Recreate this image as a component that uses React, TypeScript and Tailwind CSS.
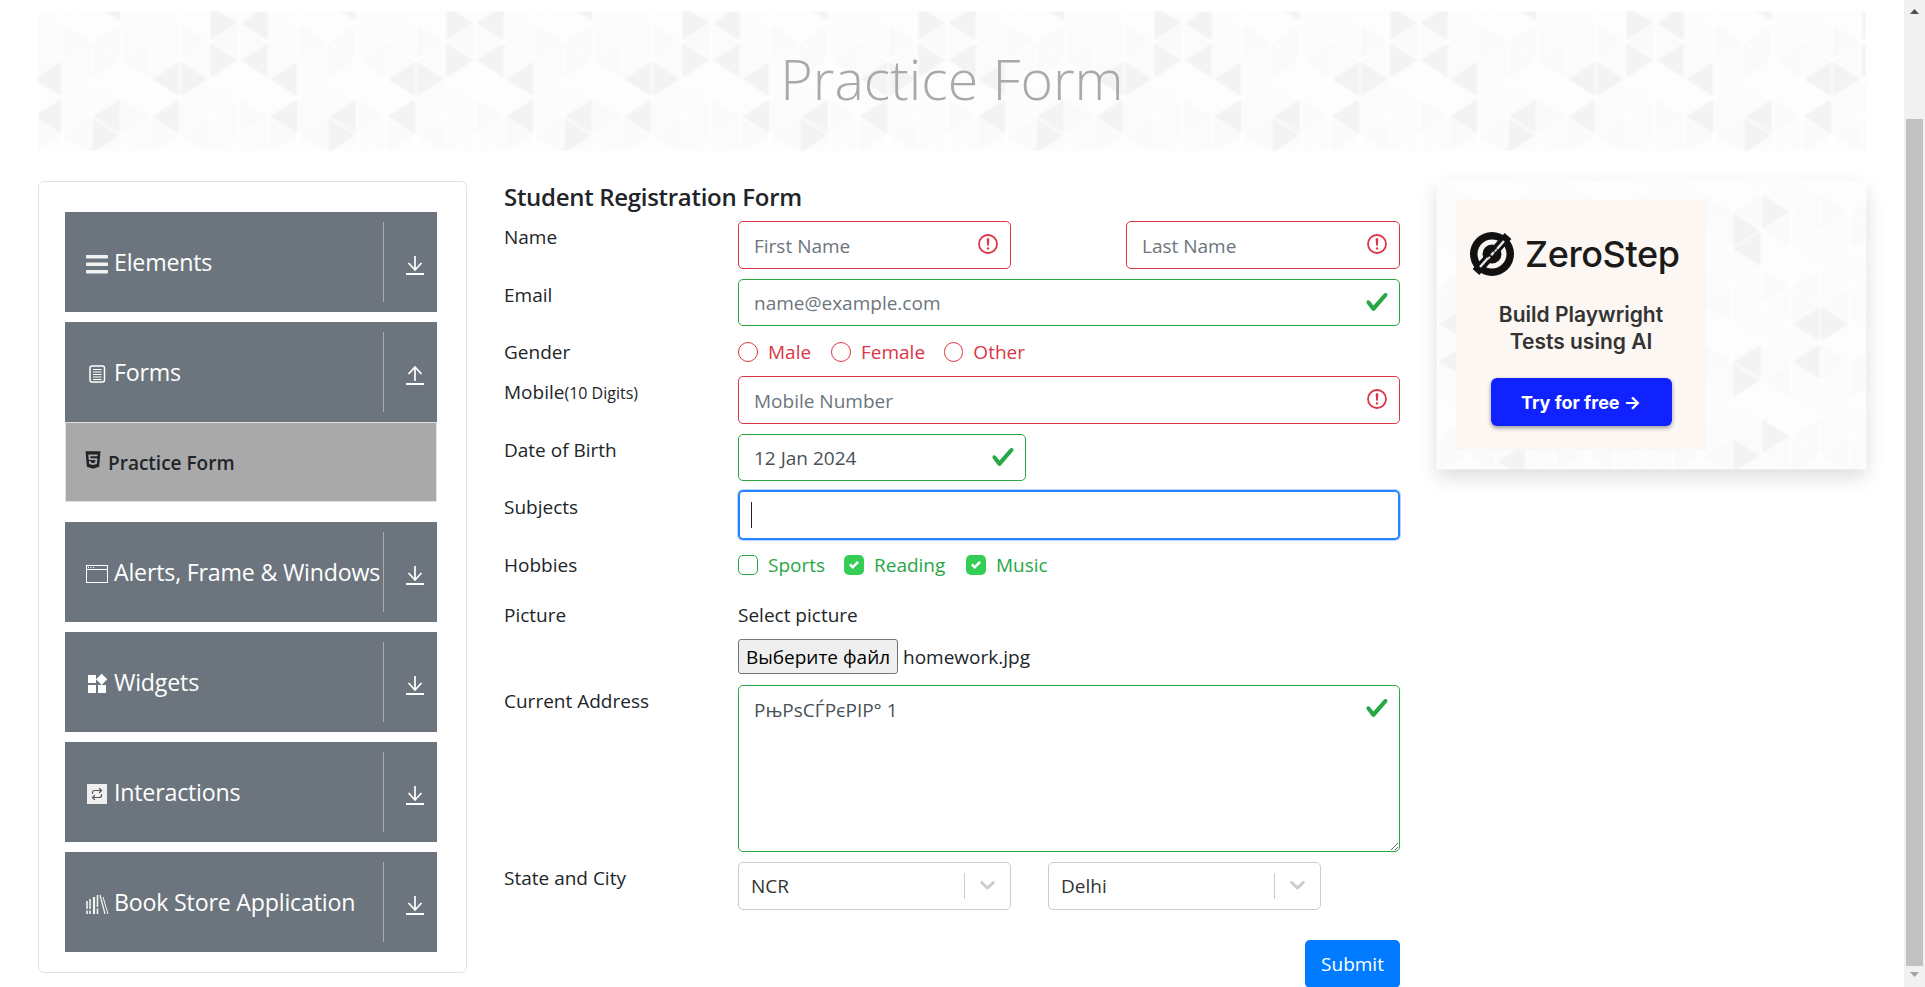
import React from 'react';
import { FaHtml5 } from 'react-icons/fa';
import { MdWidgets } from 'react-icons/md';
import { FiRepeat } from 'react-icons/fi';

type DarkTri = [number, 'L' | 'R', number];

const STEP_X = 29.5;
const STEP_Y = 37.5;

// lines with an even index have vertices at 30.5 + 37.5n, odd lines at 12 + 37.5n
const triangle = (col: number, dir: 'L' | 'R', y: number, x0: number) => {
  const left = x0 + col * STEP_X;
  const right = left + STEP_X;
  const h = STEP_Y / 2;
  return dir === 'L'
    ? `${left},${y} ${right},${y - h} ${right},${y + h}`
    : `${left},${y - h} ${left},${y + h} ${right},${y}`;
};

const shades = ['#fbfbfb', '#fcfcfc', '#fafafa', '#fdfdfd'];

const TrianglePattern: React.FC<{ width: number; height: number; x0: number; dark: DarkTri[] }> = ({
  width,
  height,
  x0,
  dark,
}) => {
  const cells: React.ReactNode[] = [];
  const cols = Math.ceil(width / STEP_X) + 1;
  const rows = Math.ceil(height / STEP_Y) + 2;
  for (let col = 0; col < cols; col++) {
    for (let row = -1; row < rows; row++) {
      const apexL = (col % 2 === 0 ? 30.5 : 12) + row * STEP_Y;
      const apexR = (col % 2 === 0 ? 12 : 30.5) + row * STEP_Y;
      cells.push(
        <polygon key={`l${col}-${row}`} points={triangle(col, 'L', apexL, x0)} fill={shades[(col * 3 + row * 5 + 8) % 4]} />,
        <polygon key={`r${col}-${row}`} points={triangle(col, 'R', apexR, x0)} fill={shades[(col * 5 + row * 7 + 9) % 4]} />,
      );
    }
  }
  return (
    <svg width={width} height={height} className="absolute inset-0 blur-[0.8px]" aria-hidden="true">
      <rect width={width} height={height} fill="#fcfcfc" />
      <g stroke="#ffffff" strokeWidth="1.4">
        {cells}
        {dark.map(([col, dir, y], i) => (
          <polygon key={i} points={triangle(col, dir, y, x0)} fill="#f3f3f3" />
        ))}
      </g>
    </svg>
  );
};

// the banner pattern repeats every 8 columns
const bannerDark: DarkTri[] = [];
for (let i = 0; i < 8; i++) {
  const c = i * 8;
  bannerDark.push(
    [c, 'L', 68],
    [c + 4, 'L', 68],
    [c + 5, 'R', 68],
    [c + 6, 'R', 49.5],
    [c + 7, 'L', 49.5],
    [c, 'L', 105.5],
    [c + 2, 'L', 105.5],
    [c + 4, 'L', 105.5],
    [c + 2, 'R', 124.5],
    [c + 2, 'L', -7],
    [c + 6, 'R', 12],
    [c + 7, 'L', 12],
  );
}

const adDark: DarkTri[] = [
  [11, 'R', 30.5],
  [10, 'R', 49.5],
  [10, 'L', 68],
  [12, 'L', 143],
  [13, 'R', 143],
  [10, 'L', 180.5],
  [12, 'L', 180.5],
  [10, 'R', 199.5],
  [11, 'R', 255.5],
  [10, 'R', 274.5],
  [2, 'L', 280.5],
  [0, 'L', 143],
  [0, 'L', 180.5],
];

const ArrowIcon: React.FC<{ up?: boolean }> = ({ up }) => (
  <svg width="18" height="19" viewBox="0 0 18 19" fill="none" stroke="#fff" aria-hidden="true">
    <path d="M0 18h18" strokeWidth="2" />
    {up ? <path d="M9 15V1M2.5 8L9 1l6.5 7" strokeWidth="1.7" /> : <path d="M9 0v14M2.5 7L9 14l6.5-7" strokeWidth="1.7" />}
  </svg>
);

const BarsIcon = () => (
  <svg width="22" height="19" viewBox="0 0 22 19" fill="#f2f2f2" aria-hidden="true">
    <rect y="0" width="22" height="3.6" rx="1" />
    <rect y="7.5" width="22" height="3.6" rx="1" />
    <rect y="15" width="22" height="3.6" rx="1" />
  </svg>
);

const DocIcon = () => (
  <svg width="17" height="18" viewBox="0 0 17 18" fill="none" stroke="#fff" aria-hidden="true">
    <rect x="1" y="1" width="14.5" height="16" rx="2" strokeWidth="1.5" />
    <path d="M4 4.5h8.5M4 7h8.5M4 9.5h8.5M4 12h8.5M4 14.5h8.5" strokeWidth="1" />
  </svg>
);

const WindowIcon = () => (
  <svg width="22" height="18" viewBox="0 0 22 18" fill="none" stroke="#fff" aria-hidden="true">
    <rect x="0.5" y="0.5" width="21" height="17" strokeWidth="1" />
    <path d="M0.5 4.5h21" strokeWidth="1" />
    <path d="M2 2.5h1M4.5 2.5h1M7 2.5h1" strokeWidth="1.2" />
  </svg>
);

const RepeatIcon = () => (
  <span className="flex items-center justify-center w-5 h-5 bg-[#efefef]">
    <FiRepeat size={12} color="#555b61" strokeWidth={2.4} />
  </span>
);

const LibraryIcon = () => (
  <svg width="23" height="20" viewBox="0 0 23 20" fill="none" stroke="#f2f2f2" aria-hidden="true">
    <path d="M1 7v13" strokeWidth="1.6" strokeDasharray="8 1.5" />
    <path d="M4 5v15" strokeWidth="1.6" strokeDasharray="10 1.5" />
    <path d="M8 3v17" strokeWidth="2.2" />
    <path d="M11.5 1v19" strokeWidth="1.6" strokeDasharray="12 1.5" />
    <path d="M14 1l5 19" strokeWidth="1.3" />
    <path d="M17 3l5 17" strokeWidth="1" />
  </svg>
);

const menuItems = [
  { name: 'Elements', icon: <BarsIcon /> },
  { name: 'Forms', icon: <span className="ml-[3px]"><DocIcon /></span>, open: true },
  { name: 'Alerts, Frame & Windows', icon: <WindowIcon /> },
  { name: 'Widgets', icon: <span className="-ml-[1px]"><MdWidgets size={24} color="#fff" /></span> },
  { name: 'Interactions', icon: <span className="ml-[1px]"><RepeatIcon /></span> },
  { name: 'Book Store Application', icon: <LibraryIcon /> },
];

const Sidebar = () => (
  <aside className="w-[429px] h-[792px] shrink-0 border border-[#dee2e6] rounded-[6px] pt-[30px] pl-[26px] pr-[29px]">
    {menuItems.map((item) => (
      <div key={item.name} className="mb-[10px]">
        <div className="flex items-center h-[100px] bg-[#6c757d] text-white pl-[21px]">
          <div className="flex items-center w-[297px] shrink-0">
            <span className="flex items-center w-[28px] shrink-0 mt-[4px]">{item.icon}</span>
            <span className="text-[23.2px] whitespace-nowrap tracking-[-0.2px] leading-[30px]">{item.name}</span>
          </div>
          <div className="w-px h-20 bg-[#a7acb1]" />
          <span className="ml-[22px] mt-[6px]">
            <ArrowIcon up={item.open} />
          </span>
        </div>
        {item.open && (
          <div className="flex items-center h-20 bg-[#a9a9a9] border border-[#dee2e6] pl-[17px] mb-[20px] text-[#212529]">
            <FaHtml5 size={20} className="mt-[-4px]" />
            <span className="ml-[5px] mt-[2px] text-[19px] font-semibold">Practice Form</span>
          </div>
        )}
      </div>
    ))}
  </aside>
);

const InvalidIcon = () => (
  <svg width="24" height="24" viewBox="0 0 12 12" fill="none" stroke="#dc3545" strokeWidth="0.9" className="absolute right-[11px] top-[11px]" aria-hidden="true">
    <circle cx="6" cy="6" r="4.5" />
    <path strokeLinejoin="round" d="M5.8 3.6h.4L6 6.5z" />
    <circle cx="6" cy="8.2" r=".6" fill="#dc3545" stroke="none" />
  </svg>
);

const ValidIcon = () => (
  <svg width="24" height="24" viewBox="0 0 8 8" className="absolute right-[11px] top-[11px]" aria-hidden="true">
    <path fill="#28a745" d="M2.3 6.73L.6 4.53c-.4-1.04.46-1.4 1.1-.8l1.1 1.4 3.4-3.8c.6-.63 1.6-.27 1.2.7l-4 4.6c-.43.5-.8.4-1.1.1z" />
  </svg>
);

const TextField: React.FC<{ placeholder?: string; value?: string; state: 'valid' | 'invalid'; className: string }> = ({
  placeholder,
  value,
  state,
  className,
}) => (
  <div className={`relative ${className}`}>
    <input
      readOnly
      placeholder={placeholder}
      value={value ?? ''}
      className={`w-full h-full border rounded-[5px] pl-[15px] pr-[40px] pt-px text-[19px] text-[#495057] placeholder:text-[#6c757d] outline-none ${
        state === 'valid' ? 'border-[#28a745]' : 'border-[#dc3545]'
      }`}
    />
    {state === 'valid' ? <ValidIcon /> : <InvalidIcon />}
  </div>
);

const FormLabel: React.FC<{ children: React.ReactNode; className?: string }> = ({ children, className = 'pt-px' }) => (
  <div className={`w-[234px] shrink-0 text-[19px] leading-[30px] text-[#212529] ${className}`}>{children}</div>
);

const Radio: React.FC<{ label: string; className: string }> = ({ label, className }) => (
  <div className={`flex items-center text-[19px] leading-[30px] text-[#dc3545] ${className}`}>
    <span className="w-5 h-5 rounded-full border border-[#dc3545] mr-[10px]" />
    {label}
  </div>
);

const Check: React.FC<{ label: string; checked?: boolean; className: string }> = ({ label, checked, className }) => (
  <div className={`flex items-center text-[19px] leading-[30px] text-[#28a745] ${className}`}>
    {checked ? (
      <span className="flex items-center justify-center w-5 h-5 rounded-[5px] bg-[#34ce57] mr-[10px]">
        <svg width="10" height="10" viewBox="0 0 8 8" aria-hidden="true">
          <path fill="#fff" d="M6.564.75l-3.59 3.612-1.538-1.55L0 4.26l2.974 2.99L8 2.193z" />
        </svg>
      </span>
    ) : (
      <span className="w-5 h-5 rounded-[5px] border border-[#28a745] mr-[10px]" />
    )}
    {label}
  </div>
);

const SelectBox: React.FC<{ value: string }> = ({ value }) => (
  <div className="flex items-center w-[273px] h-12 border border-[#cccccc] rounded-[5px] pl-3 text-[19px] text-[#333333]">
    <span className="flex-1 pt-px">{value}</span>
    <span className="w-px h-[26px] bg-[#cccccc]" />
    <svg width="25" height="25" viewBox="0 0 20 20" fill="#cccccc" className="mx-[10px] -mt-[3px]" aria-hidden="true">
      <path d="M4.516 7.548c0.436-0.446 1.043-0.481 1.576 0l3.908 3.747 3.908-3.747c0.533-0.481 1.141-0.446 1.576 0 0.436 0.445 0.408 1.197 0 1.615-0.406 0.418-4.695 4.502-4.695 4.502-0.217 0.223-0.502 0.335-0.789 0.335s-0.572-0.112-0.789-0.335c0 0-4.287-4.084-4.695-4.502s-0.436-1.17 0-1.615z" />
    </svg>
  </div>
);

const RegistrationForm = () => (
  <section className="w-[896px] shrink-0 ml-[37px]">
    <h5 className="h-[30px] text-[24px] leading-[30px] font-semibold text-[#212529] tracking-[-0.3px] pt-px">Student Registration Form</h5>

    <div className="flex mt-[10px]">
      <FormLabel>Name</FormLabel>
      <div className="flex justify-between w-[662px]">
        <TextField placeholder="First Name" state="invalid" className="w-[273px] h-12" />
        <TextField placeholder="Last Name" state="invalid" className="w-[274px] h-12" />
      </div>
    </div>

    <div className="flex mt-[10px]">
      <FormLabel>Email</FormLabel>
      <TextField placeholder="name@example.com" state="valid" className="w-[662px] h-[47px]" />
    </div>

    <div className="flex mt-[11px]">
      <FormLabel className="pt-0">Gender</FormLabel>
      <div className="flex">
        <Radio label="Male" className="w-[93px]" />
        <Radio label="Female" className="w-[113px]" />
        <Radio label="Other" className="w-[81px]" />
      </div>
    </div>

    <div className="flex mt-[9px]">
      <FormLabel>
        Mobile<span className="text-[16px]">(10 Digits)</span>
      </FormLabel>
      <TextField placeholder="Mobile Number" state="invalid" className="w-[662px] h-12" />
    </div>

    <div className="flex mt-[10px]">
      <FormLabel>Date of Birth</FormLabel>
      <TextField value="12 Jan 2024" state="valid" className="w-[288px] h-[47px]" />
    </div>

    <div className="flex mt-[9px]">
      <FormLabel className="pt-[2px]">Subjects</FormLabel>
      <div className="flex items-center w-[662px] h-[50px] border-2 border-[#2684ff] rounded-[5px] pl-[11px] shadow-[0_0_0_1px_#b8d6ff]">
        <span className="w-px h-[26px] bg-[#222222]" />
      </div>
    </div>

    <div className="flex mt-[10px]">
      <FormLabel className="pt-0">Hobbies</FormLabel>
      <div className="flex">
        <Check label="Sports" className="w-[106px]" />
        <Check label="Reading" className="w-[122px]" checked />
        <Check label="Music" className="w-[90px]" checked />
      </div>
    </div>

    <div className="flex mt-[20px]">
      <FormLabel className="pt-0">Picture</FormLabel>
      <div className="text-[19px] leading-[30px] text-[#212529]">Select picture</div>
    </div>

    <div className="flex items-center mt-[9px] pl-[234px]">
      <button className="w-[160px] h-[35px] pt-[2px] bg-[#efefef] border border-[#767676] rounded-[3px] text-[19px] text-black whitespace-nowrap">
        Выберите файл
      </button>
      <span className="ml-[5px] pt-[2px] text-[19px] text-[#212529]">homework.jpg</span>
    </div>

    <div className="flex mt-[11px]">
      <FormLabel>Current Address</FormLabel>
      <div className="relative w-[662px] h-[167px]">
        <textarea
          readOnly
          value="РњРѕСЃРєРІР° 1"
          className="block w-full h-full border border-[#28a745] rounded-[5px] pl-[15px] pt-[9px] text-[19px] leading-[30px] text-[#495057] outline-none resize"
        />
        <ValidIcon />
      </div>
    </div>

    <div className="flex mt-[10px]">
      <FormLabel>State and City</FormLabel>
      <div className="flex gap-[37px]">
        <SelectBox value="NCR" />
        <SelectBox value="Delhi" />
      </div>
    </div>

    <div className="flex justify-end mt-[30px]">
      <button className="w-[95px] h-12 bg-[#007bff] rounded-[5px] text-white text-[19px]">Submit</button>
    </div>
  </section>
);

const ZeroStepLogo = () => (
  <svg width="44" height="44" viewBox="0 0 44 44" aria-hidden="true">
    <circle cx="22" cy="22" r="22" fill="#111111" />
    <circle cx="22" cy="22" r="12" fill="none" stroke="#fcf7f2" strokeWidth="5" />
    <path d="M6 40L38 4" stroke="#111111" strokeWidth="9" />
    <path d="M10 35L18 26M21 23l3-3M27 17l7-8" stroke="#e8e8e8" strokeWidth="2.4" />
    <path d="M18 27l9-10" stroke="#cfcfcf" strokeWidth="2" strokeDasharray="3 2" />
  </svg>
);

const AdCard = () => (
  <aside className="relative w-[429px] h-[288px] shrink-0 ml-[37px] shadow-[0_8px_18px_rgba(0,0,0,0.14)] font-['Inter',sans-serif]">
    <TrianglePattern width={429} height={288} x0={0} dark={adDark} />
    <div className="relative flex flex-col items-center w-[250px] h-[250px] top-[19px] left-[19px] bg-[#fcf7f2]">
      <div className="flex items-center w-full pl-[14px] pt-[32px]">
        <ZeroStepLogo />
        <span className="ml-[11px] text-[36px] leading-[44px] font-medium text-[#1a1a1a] tracking-[-0.4px]">ZeroStep</span>
      </div>
      <p className="mt-[25px] text-center text-[21px] leading-[27px] font-semibold text-[#333333]">
        Build Playwright
        <br />
        Tests using AI
      </p>
      <button className="mt-[23px] w-[181px] h-12 rounded-[6px] bg-[#0f22ff] text-white text-[18px] font-bold shadow-[0_2px_4px_rgba(0,0,40,0.4)]">
        Try for free →
      </button>
    </div>
  </aside>
);

const Scrollbar = () => (
  <div className="flex flex-col items-center w-[21px] h-full shrink-0 bg-[#f1f1f1]">
    <div className="h-[119px] w-full flex justify-center pt-[9px]">
      <svg width="9" height="5" viewBox="0 0 9 5" fill="#505050" aria-hidden="true">
        <path d="M4.5 0L9 5H0z" />
      </svg>
    </div>
    <div className="w-[17px] h-[847px] bg-[#c1c1c1]" />
    <div className="pt-[6px]">
      <svg width="9" height="5" viewBox="0 0 9 5" fill="#a3a3a3" className="block" aria-hidden="true">
        <path d="M0 0h9L4.5 5z" />
      </svg>
    </div>
  </div>
);

export default function App() {
  return (
    <div className="flex w-full h-[987px] overflow-hidden bg-white font-['Open_Sans',sans-serif]">
      <main className="w-[1904px] shrink-0 pl-[38px] pt-[11px]">
        <header className="relative flex items-center justify-center w-[1828px] h-[140px] overflow-hidden">
          <TrianglePattern width={1828} height={140} x0={-5.5} dark={bannerDark} />
          <h1 className="relative mb-[4px] text-[55.5px] font-light text-[#a9a9a9] leading-none">Practice Form</h1>
        </header>
        <div className="flex mt-[30px]">
          <Sidebar />
          <RegistrationForm />
          <AdCard />
        </div>
      </main>
      <Scrollbar />
    </div>
  );
}
